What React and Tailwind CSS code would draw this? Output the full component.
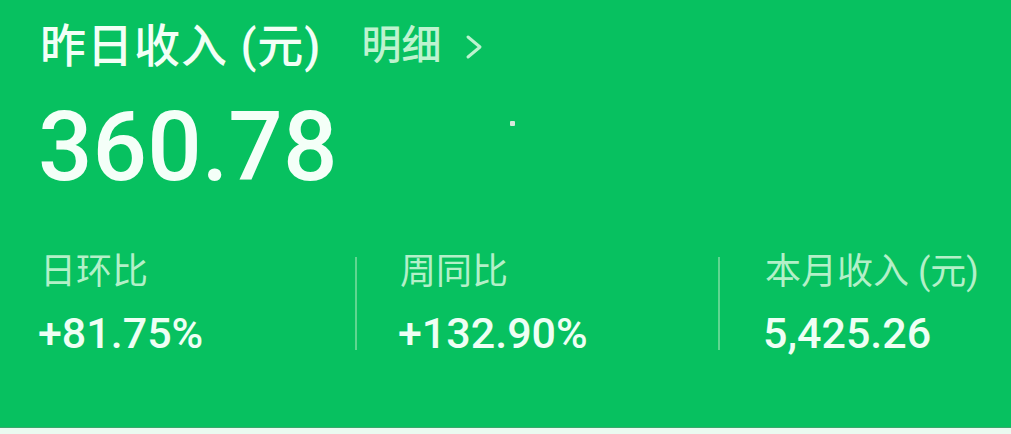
import React from 'react';

const font = { fontFamily: 'Roboto, "Noto Sans CJK SC", sans-serif' };

const stats = [
    { label: '日环比', value: '+81.75%' },
    { label: '周同比', value: '+132.90%' },
    { label: '本月收入 (元)', value: '5,425.26' },
];

const App = () => {
    return (
        <div className="w-[1011px] h-[434px] bg-[#eafaf0] overflow-hidden" style={font}>
            <div className="relative h-[428px] bg-[#07c160] pl-[40px] border-b border-[#3aa86c]">
                {/* header */}
                <div className="flex items-center pt-[23px] h-[69px]">
                    <h1 className="text-[46px] leading-[46px] font-medium tracking-[1px] text-[#f2fff6]">
                        昨日收入 <span>(元)</span>
                    </h1>
                    <span className="ml-[40px] text-[40px] leading-[44px] font-medium text-[#bdf3cf]">明细</span>
                    <svg className="ml-[24px] mt-[2px]" width="18" height="26" viewBox="0 0 18 26" fill="none">
                        <path d="M3 3 L15 13 L3 23" stroke="#bdf3cf" strokeWidth="3" strokeLinecap="round" strokeLinejoin="round" />
                    </svg>
                </div>

                {/* big number */}
                <div className="mt-[30px] text-[96px] leading-[96px] font-medium text-[#f4fff8] -ml-[2px]">360.78</div>

                {/* tiny artifact dot */}
                <span className="absolute left-[510px] top-[121px] w-[5px] h-[5px] bg-[#d8e8dc] rounded-[1px]"></span>

                {/* stats row */}
                <div className="flex items-start mt-[59px]">
                    {stats.map((s, i) => (
                        <React.Fragment key={i}>
                            {i > 0 && <div className="w-[2px] h-[93px] mt-[3px] bg-[#5fd690]"></div>}
                            <div className={i === 0 ? 'w-[315px]' : i === 1 ? 'w-[361px] pl-[43px]' : 'pl-[45px]'}>
                                <div className="text-[36px] leading-[36px] text-[#b3f0c8]">{s.label}</div>
                                <div className="mt-[22px] text-[43px] leading-[43px] font-medium text-[#eefff4] -ml-[2px]">{s.value}</div>
                            </div>
                        </React.Fragment>
                    ))}
                </div>
            </div>
        </div>
    );
};

export default App;
